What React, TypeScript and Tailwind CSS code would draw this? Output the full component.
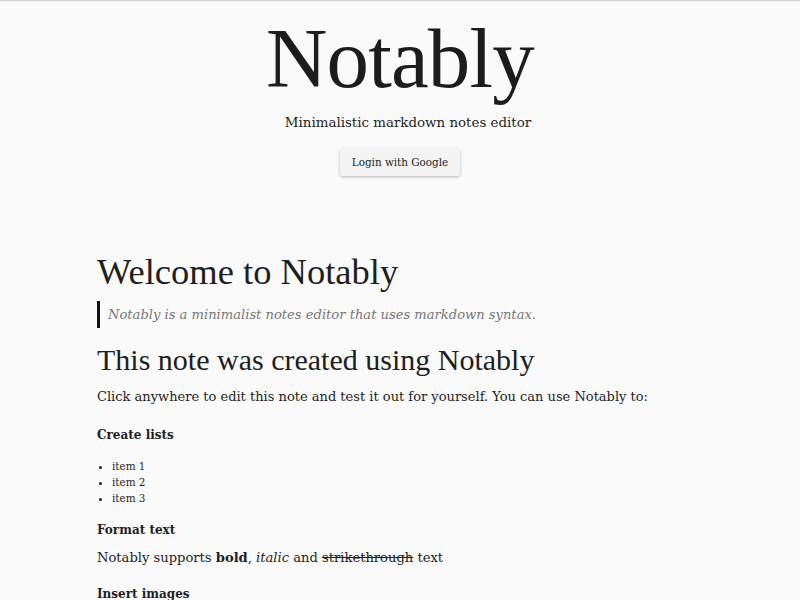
const serif = "font-['DejaVu_Serif','Liberation_Serif',serif]"
const display = "font-['Liberation_Serif','DejaVu_Serif',serif]"

export default function App() {
  return (
    <div className="min-h-screen bg-[#fafafa] text-[#1e1e1e]">
      <div className="h-px bg-[#d4d4d4]" />
      <div className="h-px bg-[#ececec]" />

      {/* Hero */}
      <header className="flex flex-col items-center">
        <h1 className={`${display} mt-[14px] text-[85px] leading-[84px] tracking-[-0.01em] text-[#1c1c1c]`}>Notably</h1>
        <p className={`${serif} mt-[13px] pl-[16px] text-[13.4px] leading-[20px]`}>Minimalistic markdown notes editor</p>
        <button
          className={`${serif} mt-[16px] h-[27px] w-[120px] rounded-[2px] bg-[#f4f4f4] text-[10.4px] text-[#222] shadow-[0_1px_3px_rgba(0,0,0,0.28)]`}
        >
          Login with Google
        </button>
      </header>

      {/* Sample note */}
      <main className="mx-auto w-[606px]">
        <h2 className={`${display} mt-[76px] text-[36.5px] leading-[40px]`}>Welcome to Notably</h2>
        <blockquote className="mt-[9px] flex h-[27px] items-center border-l-[3px] border-[#111]">
          <p className={`${serif} pl-[8px] text-[13.1px] italic leading-[27px] text-[#777]`}>
            Notably is a minimalist notes editor that uses markdown syntax.
          </p>
        </blockquote>
        <h3 className={`${display} mt-[14px] text-[30px] leading-[36px]`}>This note was created using Notably</h3>
        <p className={`${serif} mt-[9px] text-[13px] leading-[20px]`}>
          Click anywhere to edit this note and test it out for yourself. You can use Notably to:
        </p>

        <h4 className={`${serif} mt-[19px] text-[12px] font-bold leading-[18px]`}>Create lists</h4>
        <ul className={`${serif} mt-[14px] list-disc pl-[15px] text-[10.4px] leading-[16px]`}>
          <li>item 1</li>
          <li>item 2</li>
          <li>item 3</li>
        </ul>

        <h4 className={`${serif} mt-[15px] text-[12px] font-bold leading-[18px]`}>Format text</h4>
        <p className={`${serif} mt-[9px] text-[13.1px] leading-[20px]`}>
          Notably supports <strong className="font-bold">bold</strong>, <em>italic</em> and{' '}
          <s>strikethrough</s> text
        </p>

        <h4 className={`${serif} mt-[17px] text-[12px] font-bold leading-[18px]`}>Insert images</h4>
      </main>
    </div>
  )
}
